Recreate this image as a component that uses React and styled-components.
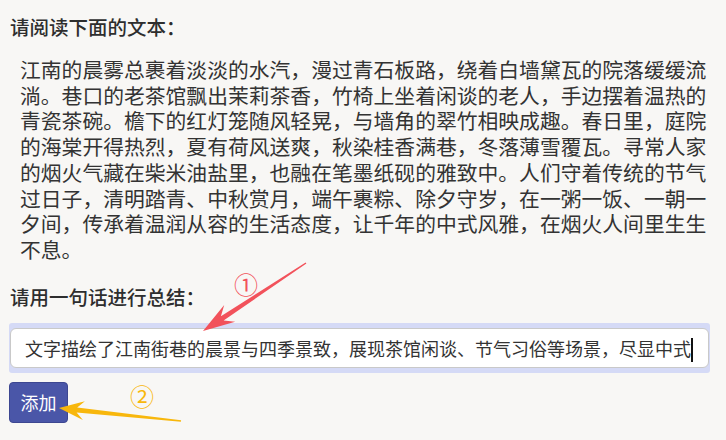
import React from 'react'
import styled, { createGlobalStyle } from 'styled-components'

const GlobalStyle = createGlobalStyle`
	html, body {
		margin: 0;
		padding: 0;
		background: #f8f7f5;
	}
	body {
		font-family: 'Noto Sans CJK SC', 'Noto Sans', sans-serif;
		color: #333;
	}
`

const Page = styled.main`
	position: relative;
	width: 726px;
	height: 440px;
	box-sizing: border-box;
	padding: 14px 16px 0 10px;
	display: flex;
	flex-direction: column;
	overflow: hidden;
`

const Label = styled.h2`
	margin: ${(p) => p.$top || 0}px 0 0;
	font-size: 19.5px;
	line-height: 26px;
	font-weight: 500;
	color: #2e2e2e;
`

const Passage = styled.p`
	margin: 17px 0 0 10px;
	font-size: 20.8px;
	line-height: 25.7px;
	color: #333;
`

const InputWrap = styled.div`
	position: relative;
	margin: 13px 0 0 -1px;
	padding: 5px 1px;
	background: #d5daf6;
	border-radius: 3px;
`

const TextInput = styled.input`
	display: block;
	width: 100%;
	height: 40px;
	box-sizing: border-box;
	padding: 0 15px 0 14px;
	border: 1px solid #c9c9c9;
	border-radius: 6px;
	background: #fff;
	font-family: 'Noto Sans CJK SC', sans-serif;
	font-size: 18px;
	color: #333;
	outline: none;
`

const Caret = styled.span`
	position: absolute;
	left: 682px;
	top: 15px;
	width: 2px;
	height: 24px;
	background: #111;
`

const AddButton = styled.button`
	align-self: flex-start;
	margin: 9px 0 0 -1px;
	width: 59px;
	height: 41px;
	padding: 0;
	border: 1px solid #3d4791;
	border-radius: 4px;
	background: #4a56a8;
	color: #fff;
	font-family: 'Noto Sans CJK SC', sans-serif;
	font-size: 18px;
`

const Overlay = styled.svg`
	position: absolute;
	left: 0;
	top: 0;
	width: 726px;
	height: 440px;
	pointer-events: none;
`

const Mark = styled.text`
	font-family: 'Noto Sans CJK SC', sans-serif;
	font-size: 24px;
`

const arrowPath = (x1, y1, x2, y2, head, half, tailW, neckW) => {
	const dx = x2 - x1
	const dy = y2 - y1
	const len = Math.hypot(dx, dy)
	const ux = dx / len
	const uy = dy / len
	const nx = -uy
	const ny = ux
	const bx = x2 - ux * head
	const by = y2 - uy * head
	const kx = x2 - ux * head * 0.72
	const ky = y2 - uy * head * 0.72
	const pts = [
		[x1 + (nx * tailW) / 2, y1 + (ny * tailW) / 2],
		[kx + (nx * neckW) / 2, ky + (ny * neckW) / 2],
		[bx + nx * half, by + ny * half],
		[x2, y2],
		[bx - nx * half, by - ny * half],
		[kx - (nx * neckW) / 2, ky - (ny * neckW) / 2],
		[x1 - (nx * tailW) / 2, y1 - (ny * tailW) / 2],
	]
	return 'M' + pts.map((p) => p[0].toFixed(1) + ' ' + p[1].toFixed(1)).join(' L') + ' Z'
}

const passage =
	'江南的晨雾总裹着淡淡的水汽，漫过青石板路，绕着白墙黛瓦的院落缓缓流淌。巷口的老茶馆飘出茉莉茶香，竹椅上坐着闲谈的老人，手边摆着温热的青瓷茶碗。檐下的红灯笼随风轻晃，与墙角的翠竹相映成趣。春日里，庭院的海棠开得热烈，夏有荷风送爽，秋染桂香满巷，冬落薄雪覆瓦。寻常人家的烟火气藏在柴米油盐里，也融在笔墨纸砚的雅致中。人们守着传统的节气过日子，清明踏青、中秋赏月，端午裹粽、除夕守岁，在一粥一饭、一朝一夕间，传承着温润从容的生活态度，让千年的中式风雅，在烟火人间里生生不息。'

const summary =
	'文字描绘了江南街巷的晨景与四季景致，展现茶馆闲谈、节气习俗等场景，尽显中式风雅。'

export default function App() {
	return (
		<Page>
			<GlobalStyle />
			<Label>请阅读下面的文本：</Label>
			<Passage>{passage}</Passage>
			<Label $top={21}>请用一句话进行总结：</Label>
			<InputWrap>
				<TextInput type='text' value={summary} readOnly />
				<Caret />
			</InputWrap>
			<AddButton>添加</AddButton>
			<Overlay viewBox='0 0 726 440'>
				<path d={arrowPath(306, 263, 203, 331, 32, 10, 1.5, 5)} fill='#f2525b' />
				<Mark x='246' y='294' textAnchor='middle' fill='#f2525b'>①</Mark>
				<path d={arrowPath(181, 421, 59, 408, 25, 9.5, 1.5, 5)} fill='#f8b70c' />
				<Mark x='142' y='406' textAnchor='middle' fill='#f8b70c'>②</Mark>
			</Overlay>
		</Page>
	)
}
